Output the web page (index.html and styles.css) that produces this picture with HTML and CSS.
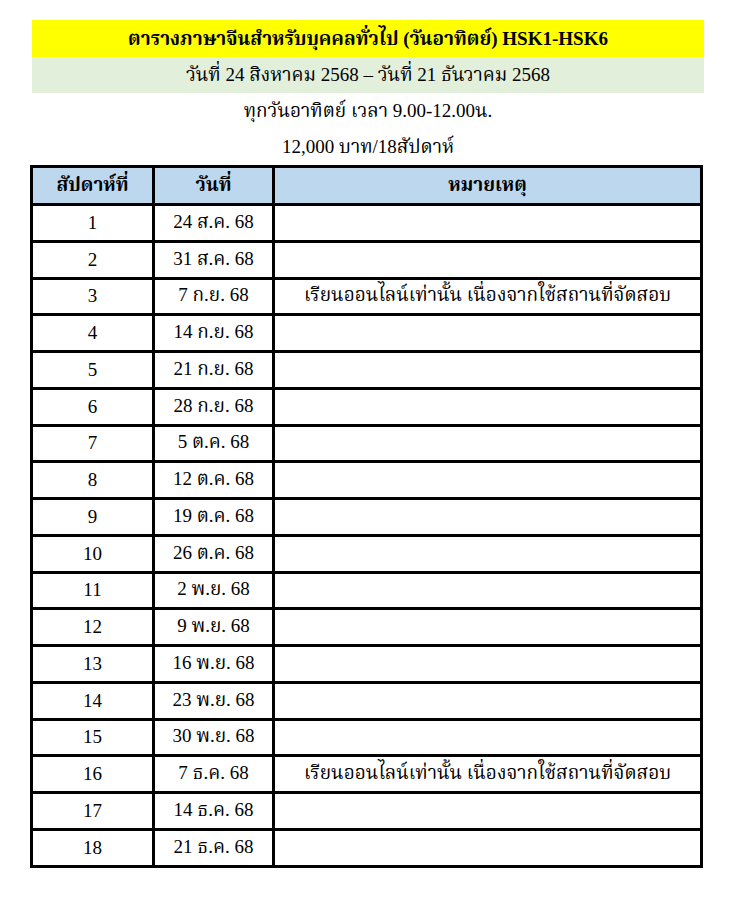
FILE: index.html
```html
<!DOCTYPE html>
<html lang="th">
<head>
<meta charset="utf-8">
<title>ตารางภาษาจีนสำหรับบุคคลทั่วไป</title>
<link rel="stylesheet" href="styles.css">
</head>
<body>
<div class="page">
  <div class="band band-title">ตารางภาษาจีนสำหรับบุคคลทั่วไป (วันอาทิตย์) HSK1-HSK6</div>
  <div class="band band-date">วันที่ 24 สิงหาคม 2568 – วันที่ 21 ธันวาคม 2568</div>
  <div class="band">ทุกวันอาทิตย์ เวลา 9.00-12.00น.</div>
  <div class="band">12,000 บาท/18สัปดาห์</div>
  <table class="schedule">
    <colgroup>
      <col class="c-week">
      <col class="c-date">
      <col class="c-note">
    </colgroup>
    <thead>
      <tr><th>สัปดาห์ที่</th><th>วันที่</th><th>หมายเหตุ</th></tr>
    </thead>
    <tbody>
      <tr><td>1</td><td>24 ส.ค. 68</td><td></td></tr>
      <tr><td>2</td><td>31 ส.ค. 68</td><td></td></tr>
      <tr><td>3</td><td>7 ก.ย. 68</td><td>เรียนออนไลน์เท่านั้น เนื่องจากใช้สถานที่จัดสอบ</td></tr>
      <tr><td>4</td><td>14 ก.ย. 68</td><td></td></tr>
      <tr><td>5</td><td>21 ก.ย. 68</td><td></td></tr>
      <tr><td>6</td><td>28 ก.ย. 68</td><td></td></tr>
      <tr><td>7</td><td>5 ต.ค. 68</td><td></td></tr>
      <tr><td>8</td><td>12 ต.ค. 68</td><td></td></tr>
      <tr><td>9</td><td>19 ต.ค. 68</td><td></td></tr>
      <tr><td>10</td><td>26 ต.ค. 68</td><td></td></tr>
      <tr><td>11</td><td>2 พ.ย. 68</td><td></td></tr>
      <tr><td>12</td><td>9 พ.ย. 68</td><td></td></tr>
      <tr><td>13</td><td>16 พ.ย. 68</td><td></td></tr>
      <tr><td>14</td><td>23 พ.ย. 68</td><td></td></tr>
      <tr><td>15</td><td>30 พ.ย. 68</td><td></td></tr>
      <tr><td>16</td><td>7 ธ.ค. 68</td><td>เรียนออนไลน์เท่านั้น เนื่องจากใช้สถานที่จัดสอบ</td></tr>
      <tr><td>17</td><td>14 ธ.ค. 68</td><td></td></tr>
      <tr><td>18</td><td>21 ธ.ค. 68</td><td></td></tr>
    </tbody>
  </table>
</div>
</body>
</html>
```

FILE: styles.css
```css
html, body {
  margin: 0;
  padding: 0;
  background: #ffffff;
}
body {
  font-family: "Liberation Serif", "Noto Serif Thai", "Noto Sans Thai", serif;
  color: #000000;
  font-size: 19px;
}
.page {
  width: 674px;
  padding: 20px 0 0 30px;
}
.band {
  height: 36px;
  line-height: 36px;
  text-align: center;
  margin: 0 0 0 2px;
  white-space: nowrap;
}
.band-title {
  height: 37px;
  line-height: 37px;
  background: #ffff00;
  font-weight: bold;
}
.band-date {
  background: #e2efda;
}
.schedule {
  width: 673px;
  border-collapse: collapse;
  border: 3px solid #000000;
  table-layout: fixed;
}
.c-week { width: 122px; }
.c-date { width: 120px; }
.schedule th,
.schedule td {
  border: 3px solid #000000;
  height: 33.75px;
  padding: 0;
  text-align: center;
  vertical-align: middle;
  white-space: nowrap;
  font-weight: normal;
}
.schedule th {
  background: #bdd7ee;
  font-weight: bold;
  height: 35px;
}
```
